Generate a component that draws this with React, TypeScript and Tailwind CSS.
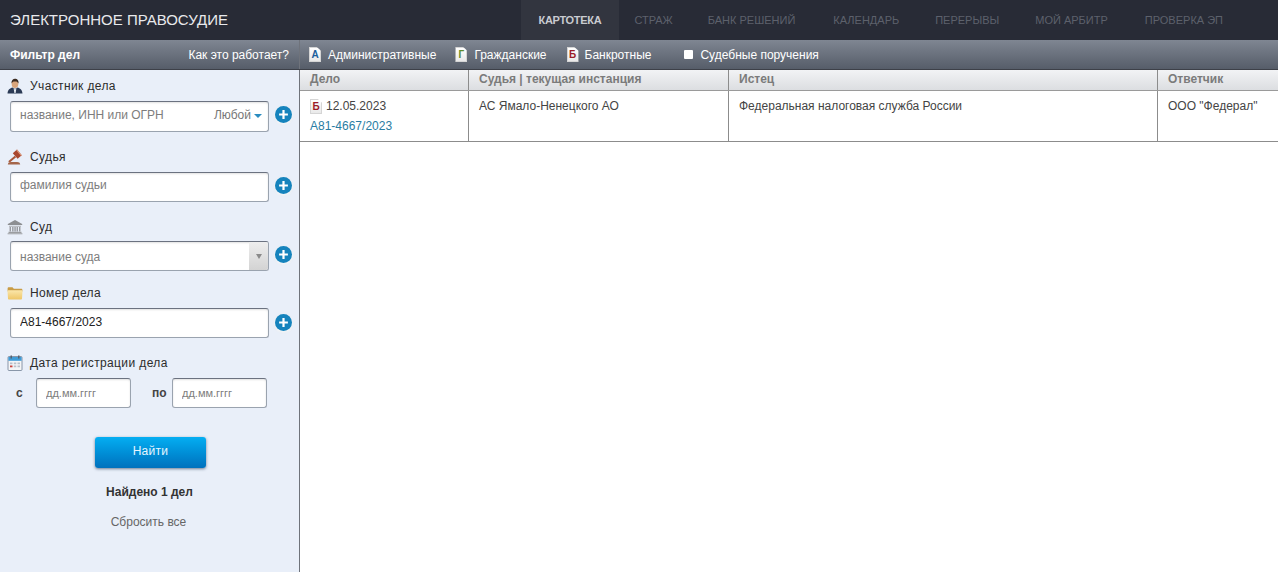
import React from 'react';

const FONT = "font-['Liberation_Sans',Arial,sans-serif]";

// отступы подобраны под каждый пункт — в макете они чуть неровные
const NAV = [
  { label: 'КАРТОТЕКА', cls: 'bg-[#32353f] pl-[18px] pr-[18px] font-bold tracking-[-0.3px] text-[#c9cbd0]' },
  { label: 'СТРАЖ', cls: 'pl-[15px] pr-[17px] text-[#5d616c]' },
  { label: 'БАНК РЕШЕНИЙ', cls: 'pl-[18px] pr-[20px] text-[#5d616c]' },
  { label: 'КАЛЕНДАРЬ', cls: 'px-[18px] text-[#5d616c]' },
  { label: 'ПЕРЕРЫВЫ', cls: 'px-[18px] text-[#5d616c]' },
  { label: 'МОЙ АРБИТР', cls: 'px-[18px] text-[#5d616c]' },
  { label: 'ПРОВЕРКА ЭП', cls: 'pl-[19px] pr-[18px] text-[#5d616c]' },
];

const PersonIcon = () => (
  <svg width="16" height="16" viewBox="0 0 16 16">
    <path d="M0.5 15.5C0.8 11.8 3 10.4 5.5 9.6L8 11l2.5-1.4c2.5.8 4.700 2.200 5 5.900z" fill="#2b3a55" />
    <path d="M6.600 10.200L8 11.400l1.400-1.200L8.600 15H7.400z" fill="#e8edf3" />
    <ellipse cx="8" cy="6" rx="3.300" ry="4" fill="#d9a57c" />
    <path d="M4.500 5.600C4.200 2.400 6 .8 8 .8s3.900 1.400 3.500 4.800C10.800 4 9.400 3.400 8 3.600 6.600 3.400 5.200 4 4.500 5.600z" fill="#3a2a20" />
  </svg>
);

const GavelIcon = () => (
  <svg width="18" height="18" viewBox="0 0 16 16">
    <path d="M.8 15.600c.3-1.800 1.400-2.500 3-2.500h6.400c1.600 0 2.700.7 3 2.500z" fill="#a4664a" />
    <path d="M1.800 11.700l6-4.900 1.300 1.500-6 4.900c-1 .6-2.100-.5-1.300-1.500z" fill="#a8583a" />
    <path d="M5.800 4.200L10 .6l4.800 5.700-4.200 3.500z" fill="#a9472e" />
    <path d="M9.300 1.200l4.800 5.700.7-.6L10 .6z" fill="#e0a083" />
  </svg>
);

const BankIcon = () => (
  <svg width="16" height="16" viewBox="0 0 16 16">
    <path d="M8 1L.8 5v1h14.400V5z" fill="#8d8f92" />
    <path d="M2 6.800h12v.9H2z" fill="#a9abae" />
    <path d="M2.600 8h1.300v4.500H2.600zM5.200 8h1.300v4.500H5.200zM7.400 8h1.300v4.500H7.400zM9.600 8h1.300v4.500H9.600zM12.100 8h1.300v4.500h-1.300z" fill="#8f9194" />
    <path d="M1.500 12.800h13V14h-13zM.6 14.200h14.800v1H.6z" fill="#9b9da0" />
  </svg>
);

const FolderIcon = () => (
  <svg width="16" height="16" viewBox="0 0 16 16">
    <defs>
      <linearGradient id="folderBody" x1="0" y1="0" x2="0" y2="1">
        <stop offset="0" stopColor="#fbe7ab" />
        <stop offset="1" stopColor="#eec667" />
      </linearGradient>
    </defs>
    <path d="M.6 3.600c0-.8.500-1.300 1.200-1.300h3.700l1.300 1.400h7.400c.7 0 1.200.5 1.200 1.200v1.500H.6z" fill="#c99c45" />
    <path d="M.5 6.200c0-.6.500-1 1.100-1h12.800c.6 0 1.100.4 1.100 1l-.5 7.200c0 .6-.5 1.100-1.100 1.100H2.100c-.6 0-1.100-.5-1.100-1.100z" fill="url(#folderBody)" />
  </svg>
);

const CalendarIcon = () => (
  <svg width="16" height="16" viewBox="0 0 16 16">
    <rect x="1" y="1.500" width="14" height="14" rx="1" fill="#f4f5f7" stroke="#6f7f94" strokeWidth="0.8" />
    <rect x="1.400" y="2" width="13.200" height="3.800" fill="#3f9bd6" />
    <rect x="3.500" y="0.500" width="1.500" height="3" fill="#55606e" />
    <rect x="11" y="0.500" width="1.500" height="3" fill="#55606e" />
    <path d="M3 7.500h2.500v1.800H3zM6.800 7.500h2.500v1.800H6.800zM10.500 7.500H13v1.800h-2.500zM6.800 10.500h2.500v1.800H6.800zM10.500 10.500H13v1.800h-2.500z" fill="#b8bfc9" />
    <path d="M3 10.500h2.500v1.800H3z" fill="#c9453f" />
  </svg>
);

const PlusButton = ({ lift }: { lift: string }) => (
  <span
    className={`ml-[6px] flex h-[17px] w-[17px] shrink-0 items-center justify-center rounded-full bg-[#1583bd] shadow-[0_1px_2px_1px_rgba(255,255,255,0.9),0_1px_2px_rgba(60,90,120,0.5)] ${lift}`}
  >
    <svg width="11" height="11" viewBox="0 0 10 10">
      <path d="M4 1h2v3h3v2H6v3H4V6H1V4h3z" fill="#fff" />
    </svg>
  </span>
);

// маленькая иконка документа с буквой типа дела
const DocIcon = ({ letter, color }: { letter: string; color: string }) => (
  <span
    className={`flex h-[15px] w-[12px] shrink-0 items-end justify-center border border-[#d5d5d5] bg-gradient-to-b from-white to-[#e9e9e9] pb-[1px] text-[10px] leading-[10px] font-bold [clip-path:polygon(0_0,65%_0,100%_25%,100%_100%,0_100%)] ${color}`}
  >
    {letter}
  </span>
);

const INPUT =
  'h-full w-full rounded-[3px] border border-[#9aa3af] border-t-[#6b7280] bg-white pl-[9px] font-normal text-[#222] shadow-[inset_0_1px_2px_rgba(0,0,0,0.12)] outline-none placeholder:text-[#7d7d7d]';

const Label = ({ icon, text, gap = 'mb-[5px]' }: { icon: React.ReactNode; text: string; gap?: string }) => (
  <div className={`flex h-[20px] items-center pl-[7px] text-[12px] tracking-[0.38px] text-[#2c2c2c] ${gap}`}>
    <span className="mr-[7px] flex w-[16px] justify-center">{icon}</span>
    {text}
  </div>
);

const Sidebar = () => (
  <aside className="w-[300px] shrink-0 self-stretch border-r border-[#6f737b] bg-[#e9eff9] pt-[6px]">
    <Label icon={<PersonIcon />} text="Участник дела" />
    <div className="flex h-[31px] items-center pl-[10px]">
      <div className="relative h-full w-[259px]">
        <input className={`${INPUT} pb-[3px] text-[12px]`} placeholder="название, ИНН или ОГРН" readOnly />
        <span className="absolute top-[5px] right-[7px] flex items-center text-[12px] text-[#777]">
          Любой
          <span className="mt-[1px] ml-[3px] h-0 w-0 border-x-[4px] border-t-[4px] border-x-transparent border-t-[#2a8cc0]" />
        </span>
      </div>
      <PlusButton lift="mb-[4px]" />
    </div>

    <div className="mt-[15px]">
      <Label icon={<GavelIcon />} text="Судья" />
      <div className="flex h-[30px] items-center pl-[10px]">
        <div className="h-full w-[259px]">
          <input className={`${INPUT} pb-[4px] text-[12px]`} placeholder="фамилия судьи" readOnly />
        </div>
        <PlusButton lift="mb-[4px]" />
      </div>
    </div>

    <div className="mt-[15px]">
      <Label icon={<BankIcon />} text="Суд" gap="mb-[4px]" />
      <div className="flex h-[30px] items-center pl-[10px]">
        <div className="relative h-full w-[259px]">
          <input className={`${INPUT} pt-[2px] text-[12px]`} placeholder="название суда" readOnly />
          <span className="absolute top-[1px] right-[1px] bottom-[1px] flex w-[19px] items-center justify-center rounded-r-[2px] bg-gradient-to-b from-[#eeeeee] to-[#d3d3d3]">
            <span className="h-0 w-0 border-x-[3px] border-t-[5px] border-x-transparent border-t-[#8a8a8a]" />
          </span>
        </div>
        <PlusButton lift="mb-[4px]" />
      </div>
    </div>

    <div className="mt-[12px]">
      <Label icon={<FolderIcon />} text="Номер дела" />
      <div className="flex h-[30px] items-center pl-[10px]">
        <div className="h-full w-[259px]">
          <input className={`${INPUT} pb-[2px] text-[12px]`} value="А81-4667/2023" readOnly />
        </div>
        <PlusButton lift="mb-[2px]" />
      </div>
    </div>

    <div className="mt-[15px]">
      <Label icon={<CalendarIcon />} text="Дата регистрации дела" />
      <div className="flex h-[30px] items-center text-[12px] font-bold text-[#444]">
        <span className="w-[36px] pl-[16px]">с</span>
        <div className="h-full w-[95px]">
          <input className={`${INPUT} text-[11px]`} placeholder="дд.мм.гггг" readOnly />
        </div>
        <span className="w-[41px] pl-[21px]">по</span>
        <div className="h-full w-[95px]">
          <input className={`${INPUT} text-[11px]`} placeholder="дд.мм.гггг" readOnly />
        </div>
      </div>
    </div>

    <div className="mt-[29px] flex justify-center pl-[2px]">
      <button className="h-[31px] w-[111px] rounded-[3px] bg-gradient-to-b from-[#05aef2] to-[#0071bd] pb-[4px] text-[12px] tracking-[0.3px] text-[#e6f6ff] shadow-[0_1px_3px_rgba(30,50,80,0.6)]">
        Найти
      </button>
    </div>
    <div className="mt-[16px] text-center text-[12px] leading-[16px] font-bold text-[#333]">Найдено 1 дел</div>
    <div className="mt-[14px] pr-[2px] text-center text-[12px] leading-[16px] text-[#666]">Сбросить все</div>
  </aside>
);

const HEAD_CELL = 'flex items-center border-r border-[#8c8c8c] pb-[2px] pl-[10px] text-[12px] font-bold text-[#7b7b7b]';
const BODY_CELL = 'border-r border-[#8c8c8c] pt-[8px] pl-[10px] text-[12px] leading-[15px] text-[#444]';

const CasesTable = () => (
  <main className="min-w-0 flex-1">
    <div className="grid h-[21px] grid-cols-[169px_260px_429px_1fr] border-b border-[#9a9a9a] bg-gradient-to-b from-[#f2f3f5] to-[#dcdee1]">
      <div className={HEAD_CELL}>Дело</div>
      <div className={HEAD_CELL}>Судья | текущая инстанция</div>
      <div className={HEAD_CELL}>Истец</div>
      <div className={`${HEAD_CELL} border-r-0`}>Ответчик</div>
    </div>
    <div className="grid h-[51px] grid-cols-[169px_260px_429px_1fr] border-b border-[#8c8c8c] bg-white">
      <div className={BODY_CELL}>
        <div className="flex h-[15px] items-center gap-[4px]">
          <DocIcon letter="Б" color="text-[#9c1c28]" />
          12.05.2023
        </div>
        <div className="mt-[5px] text-[#2a7da3]">А81-4667/2023</div>
      </div>
      <div className={BODY_CELL}>АС Ямало-Ненецкого АО</div>
      <div className={BODY_CELL}>Федеральная налоговая служба России</div>
      <div className={`${BODY_CELL} border-r-0`}>ООО "Федерал"</div>
    </div>
  </main>
);

export default function App() {
  return (
    <div className={`flex h-[572px] w-[1278px] flex-col overflow-hidden bg-white ${FONT}`}>
      <header className="flex h-[40px] shrink-0 items-stretch justify-between bg-[#282b36]">
        <div className="flex items-center pl-[10px] text-[15px] text-[#e8e9ec]">ЭЛЕКТРОННОЕ ПРАВОСУДИЕ</div>
        <nav className="mr-[37px] flex items-stretch">
          {NAV.map((item) => (
            <span key={item.label} className={`flex items-center text-[11px] ${item.cls}`}>
              {item.label}
            </span>
          ))}
        </nav>
      </header>

      <div className="flex h-[30px] shrink-0 items-stretch border-b border-[#3d4048] bg-gradient-to-b from-[#7f8692] to-[#565d69] text-[12px] text-white">
        <div className="flex w-[300px] items-center justify-between border-r border-[#6f737b] pr-[10px] pl-[10px]">
          <span className="font-bold">Фильтр дел</span>
          <span>Как это работает?</span>
        </div>
        <div className="flex items-center pl-[9px]">
          <DocIcon letter="А" color="text-[#1c5f9c]" />
          <span className="ml-[7px]">Административные</span>
          <span className="ml-[19px]">
            <DocIcon letter="Г" color="text-[#5e8c2a]" />
          </span>
          <span className="ml-[7px]">Гражданские</span>
          <span className="ml-[20px]">
            <DocIcon letter="Б" color="text-[#9c1c28]" />
          </span>
          <span className="ml-[6px]">Банкротные</span>
          <span className="ml-[33px] h-[9px] w-[9px] rounded-[1px] bg-white" />
          <span className="ml-[7px]">Судебные поручения</span>
        </div>
      </div>

      <div className="flex min-h-0 flex-1">
        <Sidebar />
        <CasesTable />
      </div>
    </div>
  );
}
